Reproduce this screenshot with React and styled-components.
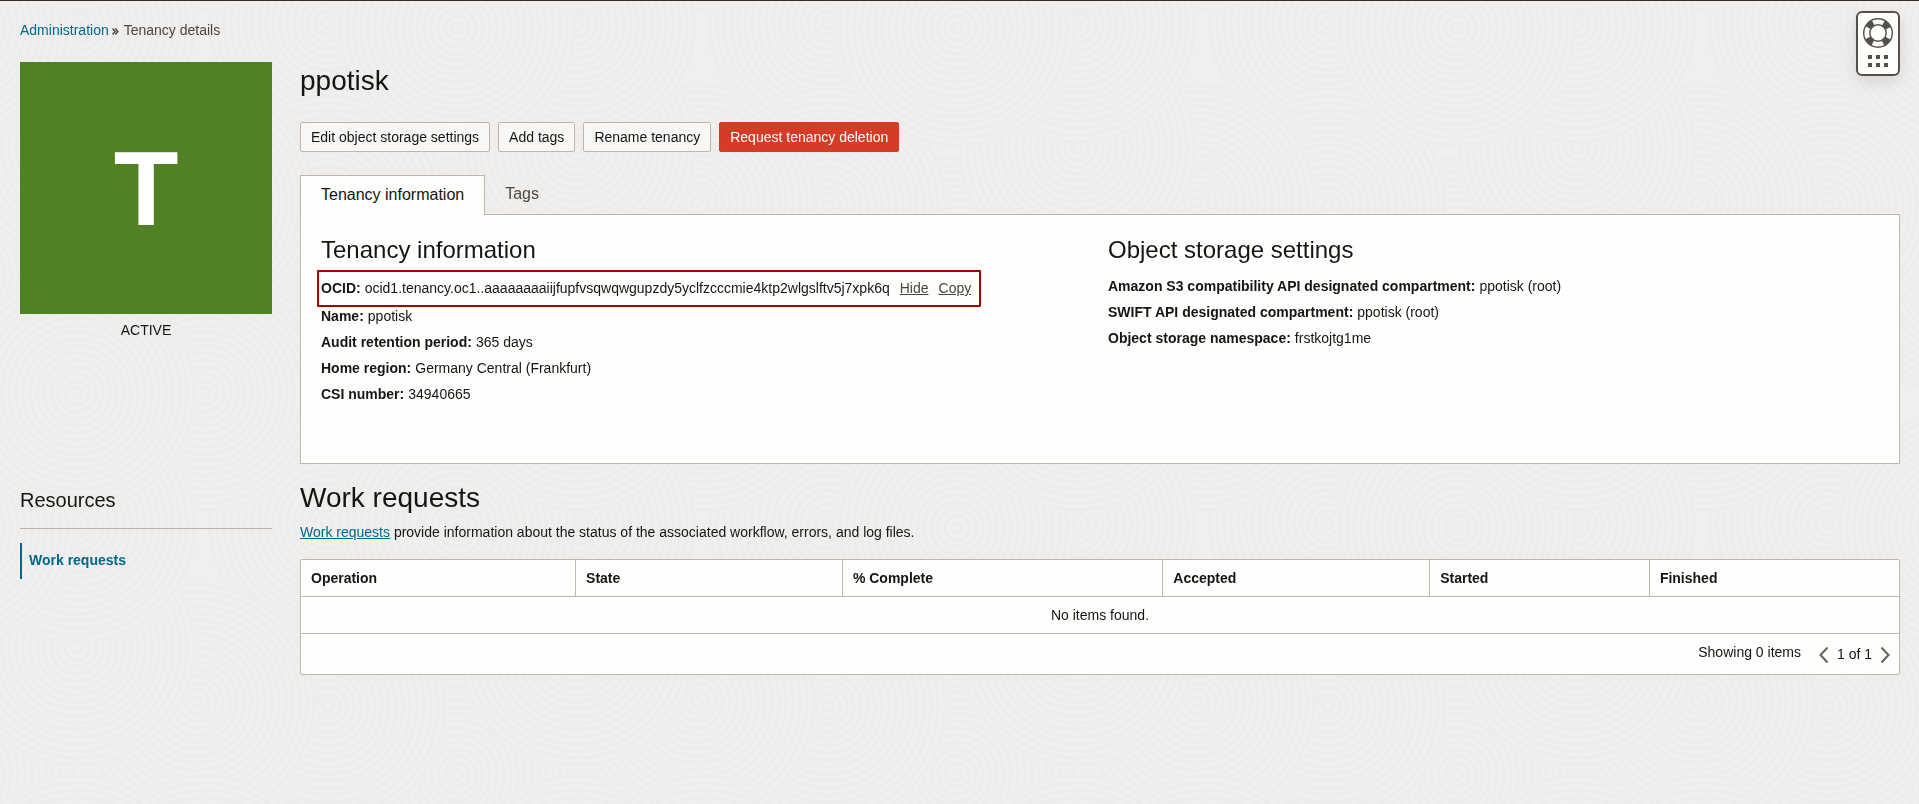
import React, { useState } from 'react';
import styled, { createGlobalStyle } from 'styled-components';

const GlobalStyle = createGlobalStyle`
    *, *::before, *::after {
        box-sizing: border-box;
    }
    body {
        margin: 0;
        background: #f0efed;
        color: #161513;
        font-family: "Liberation Sans", Arial, Helvetica, sans-serif;
        font-size: 14px;
        line-height: 20px;
    }
    button {
        font: inherit;
        cursor: pointer;
    }
`;

const Backdrop = styled.svg`
    position: fixed;
    inset: 0;
    width: 100%;
    height: 100%;
    z-index: -1;
`;

const Page = styled.div`
    min-height: 100vh;
    padding: 19px 19px 40px 20px;
    border-top: 1px solid #312d2a;
`;

const Breadcrumbs = styled.nav`
    display: flex;
    align-items: center;
    margin-bottom: 22px;
    color: #4a4643;

    svg {
        margin: 2px 5px 0 3px;
    }
`;

const Link = styled.a`
    color: #00688c;
    text-decoration: ${props => props.$underline ? 'underline' : 'none'};
`;

const Layout = styled.div`
    display: grid;
    grid-template-columns: 252px minmax(0, 1fr);
    column-gap: 28px;
    row-gap: 15px;
`;

const StatusTile = styled.div`
    display: flex;
    align-items: center;
    justify-content: center;
    height: 252px;
    background: #508223;
    color: #fff;
    font-size: 106px;
    font-weight: bold;
    line-height: 120px;
`;

const StatusText = styled.div`
    margin-top: 6px;
    text-align: center;
`;

const Title = styled.h1`
    margin: 0;
    font-size: 28px;
    font-weight: normal;
    line-height: 38px;
`;

const Toolbar = styled.div`
    display: flex;
    gap: 8px;
    margin: 22px 0 23px;
`;

const Button = styled.button`
    height: 30px;
    padding: 0 10px;
    border: 1px solid ${props => props.$danger ? '#d63b25' : '#bbb6b1'};
    border-radius: 2px;
    background: ${props => props.$danger ? '#d63b25' : '#f8f7f5'};
    color: ${props => props.$danger ? '#fff' : '#161513'};
`;

const TabList = styled.div`
    display: flex;
`;

const Tab = styled.button`
    height: 40px;
    margin-bottom: -1px;
    padding: ${props => props.$active ? '0 20px 2px' : '0 19px 4px'};
    border: 1px solid ${props => props.$active ? '#bbb6b1' : 'transparent'};
    border-bottom: 0;
    background: ${props => props.$active ? '#fefefc' : 'transparent'};
    color: ${props => props.$active ? '#161513' : '#4a4643'};
    font-size: 16px;
    z-index: ${props => props.$active ? 1 : 0};
`;

const Panel = styled.div`
    display: grid;
    grid-template-columns: 1fr 1fr;
    column-gap: 16px;
    min-height: 250px;
    padding: 19px 20px 56px;
    border: 1px solid #bbb6b1;
    background: #fefefc;
`;

const PanelTitle = styled.h2`
    margin: 0 0 7px;
    font-size: 24px;
    font-weight: normal;
    line-height: 32px;
`;

const Details = styled.dl`
    margin: 0;
`;

const Detail = styled.div`
    display: flex;
    align-items: center;
    gap: 4px;
    position: relative;
    width: fit-content;
    height: ${props => props.$marked ? '30px' : '26px'};

    &::after {
        content: '';
        display: ${props => props.$marked ? 'block' : 'none'};
        position: absolute;
        inset: -3px -10px -4px -4px;
        border: 2px solid #a80000;
        border-radius: 1px;
        pointer-events: none;
    }

    dt {
        font-weight: bold;
    }

    dd {
        display: flex;
        gap: 10px;
        margin: 0;
    }
`;

const TextButton = styled.button`
    padding: 0;
    border: 0;
    background: none;
    color: #4a4643;
    text-decoration: underline;
`;

const Resources = styled.nav`
    padding-top: 7px;

    h2 {
        margin: 0 0 14px;
        padding-bottom: 14px;
        border-bottom: 1px solid #bbb3ab;
        font-size: 20px;
        font-weight: normal;
        line-height: 28px;
    }
`;

const ResourceLink = styled.a`
    display: flex;
    align-items: center;
    height: 36px;
    padding: 0 0 2px 7px;
    border-left: 2px solid #00688c;
    color: #00688c;
    font-weight: bold;
    text-decoration: none;
`;

const Description = styled.p`
    margin: 5px 0 17px;
`;

const TableFrame = styled.div`
    border: 1px solid #bbb6b1;
    border-radius: 2px;
    background: #fefefc;
    overflow: hidden;
`;

const Table = styled.table`
    width: 100%;
    table-layout: fixed;
    border-collapse: separate;
    border-spacing: 0;

    th, td {
        height: 37px;
        padding: 0 10px;
        border-bottom: 1px solid #bbb6b1;
    }

    th {
        text-align: left;
    }

    th + th {
        border-left: 1px solid #bbb6b1;
    }

    td {
        text-align: center;
    }

    tfoot td {
        height: 40px;
        padding: 0 9px;
        border-bottom: 0;
    }
`;

const Pager = styled.div`
    display: flex;
    align-items: center;
    justify-content: flex-end;
    gap: 18px;
    padding-bottom: 4px;
`;

const PageSwitch = styled.div`
    display: flex;
    align-items: center;
    gap: 8px;
    padding-top: 4px;
`;

const PageButton = styled.button`
    display: flex;
    padding: 2px 0 0;
    border: 0;
    background: none;
    color: #665f5b;
`;

const HelpWidget = styled.button`
    display: flex;
    flex-direction: column;
    align-items: center;
    gap: 7px;
    position: fixed;
    top: 11px;
    right: 19px;
    width: 44px;
    height: 65px;
    padding: 5px 0 0;
    border: 2px solid #55504c;
    border-radius: 6px;
    background: #fefefc;
    box-shadow: 0 6px 14px rgba(22, 21, 19, 0.1);
    color: #55504c;
`;

// The overlapping ring motif repeats every 500px, later discs cover earlier ones
const TILE = 500;
const discs = [
    [457, 275], [327, 23], [328, 206], [197, 202], [205, 393],
    [77, 148], [77, 25], [457, 28], [77, 393],
];
const rings = Array.from({ length: 17 }, (_, i) => 5 + i * 7);
const shifts = [-TILE, 0, TILE];

function RingPattern() {
    return (
        <Backdrop aria-hidden="true">
            <defs>
                <g id="disc">
                    <circle r="120" fill="#f0efed" />
                    {rings.map(r => (
                        <circle key={r} r={r} fill="none" stroke="#edecea" strokeWidth="3" />
                    ))}
                </g>
                <pattern id="rings" width={TILE} height={TILE} patternUnits="userSpaceOnUse">
                    {discs.map(([x, y]) => shifts.map(dx => shifts.map(dy => (
                        <use key={`${x}-${y}-${dx}-${dy}`} href="#disc" x={x + dx} y={y + dy} />
                    ))))}
                </pattern>
            </defs>
            <rect width="100%" height="100%" fill="url(#rings)" />
        </Backdrop>
    );
}

function Chevron({ flip }) {
    return (
        <svg width="10" height="16" viewBox="0 0 10 16" fill="none" stroke="currentColor" strokeWidth="2">
            <path d={flip ? 'M1.5 0.5 L8.5 8 L1.5 15.5' : 'M8.5 0.5 L1.5 8 L8.5 15.5'} />
        </svg>
    );
}

function HelpIcon() {
    return (
        <>
            <svg width="30" height="30" viewBox="0 0 30 30" fill="none" stroke="currentColor">
                <circle cx="15" cy="15" r="11.2" strokeWidth="6" strokeDasharray="7 10.593" strokeDashoffset="-5.297" />
                <circle cx="15" cy="15" r="14.3" strokeWidth="1.4" />
                <circle cx="15" cy="15" r="8.2" strokeWidth="1.4" />
            </svg>
            <svg width="20" height="12" viewBox="0 0 20 12" fill="currentColor">
                {[0, 8].map(y => [0, 8, 16].map(x => (
                    <rect key={`${x}-${y}`} x={x} y={y} width="4" height="4" />
                )))}
            </svg>
        </>
    );
}

const ocid = 'ocid1.tenancy.oc1..aaaaaaaaiijfupfvsqwqwgupzdy5yclfzcccmie4ktp2wlgslftv5j7xpk6q';

const tenancyDetails = [
    ['Name', 'ppotisk'],
    ['Audit retention period', '365 days'],
    ['Home region', 'Germany Central (Frankfurt)'],
    ['CSI number', '34940665'],
];

const storageDetails = [
    ['Amazon S3 compatibility API designated compartment', 'ppotisk (root)'],
    ['SWIFT API designated compartment', 'ppotisk (root)'],
    ['Object storage namespace', 'frstkojtg1me'],
];

const columns = [
    { label: 'Operation', width: '17.15%' },
    { label: 'State', width: '16.7%' },
    { label: '% Complete', width: '20.05%' },
    { label: 'Accepted', width: '16.7%' },
    { label: 'Started', width: '13.75%' },
    { label: 'Finished', width: '15.65%' },
];

function DetailRows({ rows }) {
    return rows.map(([label, value]) => (
        <Detail key={label}>
            <dt>{label}:</dt>
            <dd>{value}</dd>
        </Detail>
    ));
}

export default function App() {
    const [tab, setTab] = useState('info');
    const [showOcid, setShowOcid] = useState(true);

    return (
        <>
            <GlobalStyle />
            <RingPattern />
            <Page>
                <Breadcrumbs aria-label="Breadcrumb">
                    <Link href="#administration">Administration</Link>
                    <svg width="7" height="7" viewBox="0 0 7 7" fill="none" stroke="currentColor" strokeWidth="1.5">
                        <path d="M0.5 0.5 L3 3.5 L0.5 6.5 M3.3 0.5 L5.8 3.5 L3.3 6.5" />
                    </svg>
                    <span>Tenancy details</span>
                </Breadcrumbs>
                <Layout>
                    <aside>
                        <StatusTile>T</StatusTile>
                        <StatusText>ACTIVE</StatusText>
                    </aside>
                    <main>
                        <Title>ppotisk</Title>
                        <Toolbar>
                            <Button>Edit object storage settings</Button>
                            <Button>Add tags</Button>
                            <Button>Rename tenancy</Button>
                            <Button $danger>Request tenancy deletion</Button>
                        </Toolbar>
                        <TabList role="tablist">
                            <Tab role="tab" aria-selected={tab === 'info'} $active={tab === 'info'} onClick={() => setTab('info')}>
                                Tenancy information
                            </Tab>
                            <Tab role="tab" aria-selected={tab === 'tags'} $active={tab === 'tags'} onClick={() => setTab('tags')}>
                                Tags
                            </Tab>
                        </TabList>
                        <Panel role="tabpanel">
                            {tab === 'info' &&
                                <>
                                    <section>
                                        <PanelTitle>Tenancy information</PanelTitle>
                                        <Details>
                                            <Detail $marked>
                                                <dt>OCID:</dt>
                                                <dd>
                                                    <span>{showOcid ? ocid : `...${ocid.slice(-6)}`}</span>
                                                    <TextButton onClick={() => setShowOcid(!showOcid)}>
                                                        {showOcid ? 'Hide' : 'Show'}
                                                    </TextButton>
                                                    <TextButton onClick={() => navigator.clipboard.writeText(ocid)}>Copy</TextButton>
                                                </dd>
                                            </Detail>
                                            <DetailRows rows={tenancyDetails} />
                                        </Details>
                                    </section>
                                    <section>
                                        <PanelTitle>Object storage settings</PanelTitle>
                                        <Details>
                                            <DetailRows rows={storageDetails} />
                                        </Details>
                                    </section>
                                </>
                            }
                        </Panel>
                    </main>
                    <Resources>
                        <h2>Resources</h2>
                        <ResourceLink href="#work-requests">Work requests</ResourceLink>
                    </Resources>
                    <section id="work-requests">
                        <Title as="h2">Work requests</Title>
                        <Description>
                            <Link $underline href="#about-work-requests">Work requests</Link> provide information about the status of the associated workflow, errors, and log files.
                        </Description>
                        <TableFrame>
                            <Table>
                                <colgroup>
                                    {columns.map(({ label, width }) => <col key={label} style={{ width }} />)}
                                </colgroup>
                                <thead>
                                    <tr>
                                        {columns.map(({ label }) => <th key={label} scope="col">{label}</th>)}
                                    </tr>
                                </thead>
                                <tbody>
                                    <tr>
                                        <td colSpan={columns.length}>No items found.</td>
                                    </tr>
                                </tbody>
                                <tfoot>
                                    <tr>
                                        <td colSpan={columns.length}>
                                            <Pager>
                                                <span>Showing 0 items</span>
                                                <PageSwitch>
                                                    <PageButton aria-label="Previous page"><Chevron /></PageButton>
                                                    <span>1 of 1</span>
                                                    <PageButton aria-label="Next page"><Chevron flip /></PageButton>
                                                </PageSwitch>
                                            </Pager>
                                        </td>
                                    </tr>
                                </tfoot>
                            </Table>
                        </TableFrame>
                    </section>
                </Layout>
            </Page>
            <HelpWidget aria-label="Help">
                <HelpIcon />
            </HelpWidget>
        </>
    );
}
